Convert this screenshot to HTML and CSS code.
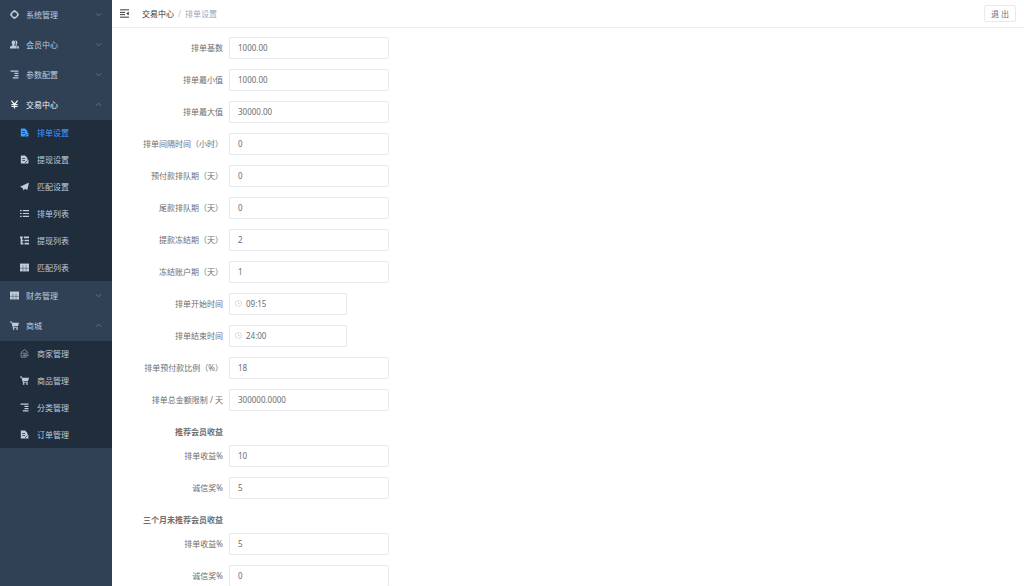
FILE: index.html
```
<!DOCTYPE html>
<html lang="zh-CN">
<head>
    <meta charset="UTF-8">
    <meta name="viewport" content="width=device-width, initial-scale=1.0">
    <title>排单设置</title>
    <link rel="stylesheet" href="styles.css">
</head>
<body>
<svg class="sprite" aria-hidden="true">
    <symbol id="i-system" viewBox="0 0 16 16"><circle cx="8" cy="8" r="5.500" fill="none" stroke="currentColor" stroke-width="2.600"/><path d="M8 .5v3M8 12.500v3M.5 8h3M12.500 8h3" fill="none" stroke="currentColor" stroke-width="4"/></symbol>
    <symbol id="i-people" viewBox="0 0 16 16"><path d="M6 1c2 0 3 1.500 3 3.500S8 8 7.500 8.500v1L12 12v3H0v-3l4.500-2.500v-1C4 8 3 6.500 3 4.500S4 1 6 1z" fill="currentColor"/><path d="M10 1c2 0 3 1.500 3 3.500S12.200 8 11.500 8.500v1L16 12v3h-3v-3.500L9.500 9.500C10.500 7 11 3 9 1z" fill="currentColor"/></symbol>
    <symbol id="i-nested" viewBox="0 0 16 16"><path d="M1 2h14M8 6h7M8 10h7M5 14h10" fill="none" stroke="currentColor" stroke-width="1.800"/></symbol>
    <symbol id="i-money" viewBox="0 0 16 16"><path d="M2.500 1L8 8l5.500-7M8 8v7M2.500 8h11M2.500 11.500h11" fill="none" stroke="currentColor" stroke-width="2.200"/></symbol>
    <symbol id="i-form" viewBox="0 0 16 16"><path d="M1.500 1h7.500l4 4v2.500l2 1.500v6H1.500zM4 5.500v1.300h5V5.500zm0 3.500v1.300h5V9z" fill="currentColor" fill-rule="evenodd"/><path d="M9 14l4-4" fill="none" stroke="#1f2d3d" stroke-width="1.300"/></symbol>
    <symbol id="i-guide" viewBox="0 0 16 16"><path d="M16 1L0 8.500l4.500 2L6.500 15l2.500-2.800 4 1.800z" fill="currentColor"/></symbol>
    <symbol id="i-list" viewBox="0 0 16 16"><path d="M0 3h3M5 3h11M0 8h3M5 8h11M0 13h3M5 13h11" fill="none" stroke="currentColor" stroke-width="2.200"/></symbol>
    <symbol id="i-tree" viewBox="0 0 16 16"><path d="M0 2.500h5M7 2.500h9M2.500 3v10.500H6M2.500 8H6M8 8h8M8 13.500h8" fill="none" stroke="currentColor" stroke-width="2.800"/></symbol>
    <symbol id="i-table" viewBox="0 0 16 16"><path d="M0 1h16v14H0z" fill="currentColor"/><path d="M5.300 4.500V15M10.700 4.500V15M0 9.500h16" fill="none" stroke="#304156" stroke-width=".8"/></symbol>
    <symbol id="i-cart" viewBox="0 0 16 16"><path d="M0 1h3.500l.7 2H16l-1.800 6.500H6.300l.4 1.500H14v1.500H5.300L2.500 2.500H0z" fill="currentColor"/><circle cx="6.500" cy="14" r="1.600" fill="currentColor"/><circle cx="12.500" cy="14" r="1.600" fill="currentColor"/></symbol>
    <symbol id="i-shop" viewBox="0 0 16 16"><path d="M2 14.500V6l6-5 6 5v1M2 14.500h9l4-4H6M4 7.500h9M5 12h6" fill="none" stroke="currentColor" stroke-width="1"/></symbol>
    <symbol id="i-arrow" viewBox="0 0 16 16"><path d="M2 5l6 6 6-6" fill="none" stroke="currentColor" stroke-width="1.800"/></symbol>
    <symbol id="i-fold" viewBox="0 0 16 16"><path d="M0 1.500h16M0 6h9M0 10h9M0 14.500h16" fill="none" stroke="currentColor" stroke-width="1.700"/><path d="M15.500 5v6L11 8z" fill="currentColor"/></symbol>
    <symbol id="i-clock" viewBox="0 0 16 16"><circle cx="8" cy="8" r="7" fill="none" stroke="currentColor" stroke-width="1.300"/><path d="M8 4v4.500h4" fill="none" stroke="currentColor" stroke-width="1.300"/></symbol>
</svg>

<div class="app">
    <nav class="sidebar">
        <button class="menu-title" type="button"><svg class="icon"><use href="#i-system"/></svg>系统管理<svg class="arrow"><use href="#i-arrow"/></svg></button>
        <button class="menu-title" type="button"><svg class="icon"><use href="#i-people"/></svg>会员中心<svg class="arrow"><use href="#i-arrow"/></svg></button>
        <button class="menu-title" type="button"><svg class="icon"><use href="#i-nested"/></svg>参数配置<svg class="arrow"><use href="#i-arrow"/></svg></button>
        <button class="menu-title current" type="button" aria-expanded="true"><svg class="icon"><use href="#i-money"/></svg>交易中心<svg class="arrow"><use href="#i-arrow"/></svg></button>
        <div class="submenu">
            <a class="active" href="#"><svg class="icon"><use href="#i-form"/></svg>排单设置</a>
            <a href="#"><svg class="icon"><use href="#i-form"/></svg>提现设置</a>
            <a href="#"><svg class="icon"><use href="#i-guide"/></svg>匹配设置</a>
            <a href="#"><svg class="icon"><use href="#i-list"/></svg>排单列表</a>
            <a href="#"><svg class="icon"><use href="#i-tree"/></svg>提现列表</a>
            <a href="#"><svg class="icon"><use href="#i-table"/></svg>匹配列表</a>
        </div>
        <button class="menu-title" type="button"><svg class="icon"><use href="#i-table"/></svg>财务管理<svg class="arrow"><use href="#i-arrow"/></svg></button>
        <button class="menu-title" type="button" aria-expanded="true"><svg class="icon"><use href="#i-cart"/></svg>商城<svg class="arrow"><use href="#i-arrow"/></svg></button>
        <div class="submenu">
            <a href="#"><svg class="icon"><use href="#i-shop"/></svg>商家管理</a>
            <a href="#"><svg class="icon"><use href="#i-cart"/></svg>商品管理</a>
            <a href="#"><svg class="icon"><use href="#i-nested"/></svg>分类管理</a>
            <a href="#"><svg class="icon"><use href="#i-form"/></svg>订单管理</a>
        </div>
    </nav>

    <div class="main">
        <header class="navbar">
            <button class="fold" type="button" aria-label="收起菜单"><svg class="icon"><use href="#i-fold"/></svg></button>
            <div class="breadcrumb">
                <a href="#">交易中心</a><span class="slash">/</span><span class="here">排单设置</span>
            </div>
            <button class="logout" type="button">退 出</button>
        </header>

        <form class="form">
            <div class="row"><label for="base">排单基数</label><input id="base" type="text" value="1000.00"></div>
            <div class="row"><label for="min">排单最小值</label><input id="min" type="text" value="1000.00"></div>
            <div class="row"><label for="max">排单最大值</label><input id="max" type="text" value="30000.00"></div>
            <div class="row"><label for="interval">排单间隔时间（小时）</label><input id="interval" type="text" value="0"></div>
            <div class="row"><label for="prepay">预付款排队期（天）</label><input id="prepay" type="text" value="0"></div>
            <div class="row"><label for="rest">尾款排队期（天）</label><input id="rest" type="text" value="0"></div>
            <div class="row"><label for="freeze">提款冻结期（天）</label><input id="freeze" type="text" value="2"></div>
            <div class="row"><label for="account">冻结账户期（天）</label><input id="account" type="text" value="1"></div>
            <div class="row">
                <label for="start">排单开始时间</label>
                <div class="time"><svg class="clock"><use href="#i-clock"/></svg><input id="start" type="text" value="09:15"></div>
            </div>
            <div class="row">
                <label for="end">排单结束时间</label>
                <div class="time"><svg class="clock"><use href="#i-clock"/></svg><input id="end" type="text" value="24:00"></div>
            </div>
            <div class="row"><label for="ratio">排单预付款比例（%）</label><input id="ratio" type="text" value="18"></div>
            <div class="row"><label for="limit">排单总金额限制 / 天</label><input id="limit" type="text" value="300000.0000"></div>

            <h2>推荐会员收益</h2>
            <div class="row"><label for="income1">排单收益%</label><input id="income1" type="text" value="10"></div>
            <div class="row"><label for="honest1">诚信奖%</label><input id="honest1" type="text" value="5"></div>

            <h2>三个月未推荐会员收益</h2>
            <div class="row"><label for="income2">排单收益%</label><input id="income2" type="text" value="5"></div>
            <div class="row"><label for="honest2">诚信奖%</label><input id="honest2" type="text" value="0"></div>
        </form>
    </div>
</div>
</body>
</html>
```
FILE: styles.css
```
:root {
    --menu-bg: #304156;
    --submenu-bg: #1f2d3d;
    --menu-text: #bfcbd9;
    --active: #409eff;
    --text: #6b6d71;
    --border: #e8eaef;
    --label-width: 107px;
}

* {
    box-sizing: border-box;
    margin: 0;
    padding: 0;
}

body {
    background: #fff;
    color: var(--text);
    font-family: 'Noto Sans', 'Noto Sans CJK SC', sans-serif;
    font-size: 8px;
}

button,
input {
    font: inherit;
    color: inherit;
}

a {
    color: inherit;
    text-decoration: none;
}

.sprite {
    display: none;
}

.icon {
    width: 9px;
    height: 9px;
    flex: none;
}

.app {
    display: flex;
    height: 100vh;
    overflow: hidden;
}

/* sidebar */
.sidebar {
    flex: none;
    width: 112px;
    background: var(--menu-bg);
    color: var(--menu-text);
    overflow-y: auto;
    scrollbar-width: none;
}

.menu-title {
    display: flex;
    align-items: center;
    gap: 7px;
    width: 100%;
    height: 30px;
    padding: 0 10px 2px;
    border: none;
    background: none;
    text-align: left;
    cursor: pointer;
}

.menu-title.current {
    color: #f4f4f5;
}

.arrow {
    width: 7px;
    height: 7px;
    margin-left: auto;
    color: #73808f;
}

[aria-expanded="true"] .arrow {
    transform: rotate(180deg);
}

.submenu {
    display: grid;
    gap: 1px;
    background: var(--submenu-bg);
}

.submenu a {
    display: flex;
    align-items: center;
    gap: 8px;
    height: 26px;
    padding: 0 0 2px 20px;
}

.submenu .active {
    color: var(--active);
}

/* top bar */
.main {
    flex: 1;
    min-width: 0;
    overflow-y: auto;
    scrollbar-width: none;
}

.navbar {
    display: flex;
    align-items: center;
    height: 28px;
    padding: 0 8px;
    border-bottom: 1px solid #eceef2;
}

.fold {
    display: flex;
    margin-right: 13px;
    border: none;
    background: none;
    color: #303133;
    cursor: pointer;
}

.breadcrumb {
    display: flex;
    color: #303133;
}

.slash {
    margin: 0 4px;
    color: #c0c4cc;
}

.here {
    color: #97a8be;
}

.logout {
    width: 32px;
    height: 17px;
    margin-left: auto;
    border: 1px solid var(--border);
    border-radius: 2px;
    background: #fff;
    cursor: pointer;
}

/* form */
.form {
    padding: 9px 10px;
}

.row {
    display: flex;
    margin-bottom: 10px;
}

.row label,
.form h2 {
    width: var(--label-width);
    padding-right: 6px;
    font-size: 8px;
    line-height: 22px;
    text-align: right;
    white-space: nowrap;
}

.form h2 {
    margin-bottom: 2px;
}

.row input {
    width: 160px;
    height: 22px;
    padding: 0 8px 2px;
    border: 1px solid var(--border);
    border-radius: 2px;
    background: #fff;
    outline: none;
}

.time {
    position: relative;
}

.row .time input {
    width: 118px;
    padding-left: 16px;
}

.clock {
    position: absolute;
    top: 7px;
    left: 6px;
    width: 7px;
    height: 7px;
    color: #c0c4cc;
}
```
